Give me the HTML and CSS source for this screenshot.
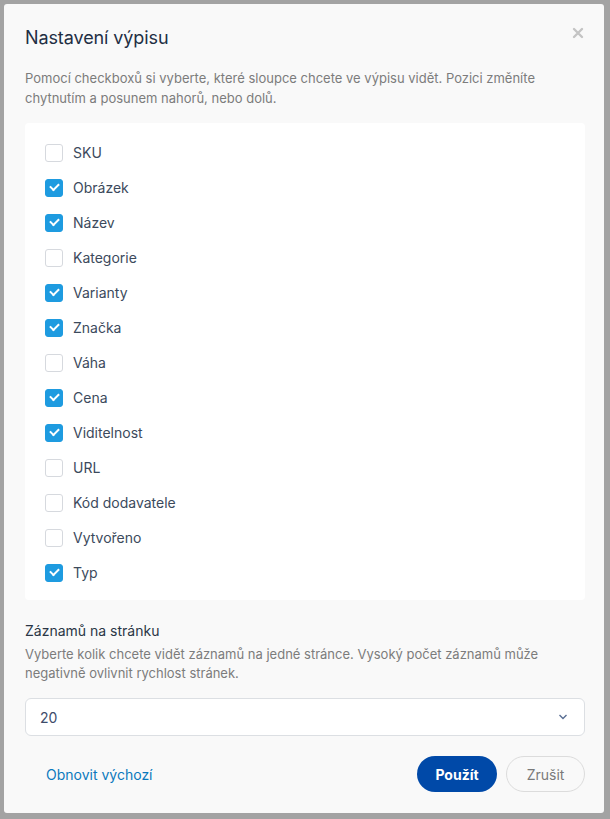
FILE: index.html
```html
<!DOCTYPE html>
<html lang="cs">
<head>
<meta charset="utf-8">
<link rel="stylesheet" href="styles.css">
</head>
<body>
<div class="modal">
  <div class="header">
    <h2 class="title">Nastavení výpisu</h2>
    <span class="close">
      <svg width="12" height="12" viewBox="0 0 12 12"><path d="M2 2 L10 10 M10 2 L2 10" stroke="#c4c4c4" stroke-width="2.4" stroke-linecap="round"/></svg>
    </span>
  </div>
  <p class="desc">Pomocí checkboxů si vyberte, které sloupce chcete ve výpisu vidět. Pozici změníte chytnutím a posunem nahorů, nebo dolů.</p>
  <ul class="list">
    <li><span class="cb"></span>SKU</li>
    <li><span class="cb on"></span>Obrázek</li>
    <li><span class="cb on"></span>Název</li>
    <li><span class="cb"></span>Kategorie</li>
    <li><span class="cb on"></span>Varianty</li>
    <li><span class="cb on"></span>Značka</li>
    <li><span class="cb"></span>Váha</li>
    <li><span class="cb on"></span>Cena</li>
    <li><span class="cb on"></span>Viditelnost</li>
    <li><span class="cb"></span>URL</li>
    <li><span class="cb"></span>Kód dodavatele</li>
    <li><span class="cb"></span>Vytvořeno</li>
    <li><span class="cb on"></span>Typ</li>
  </ul>
  <h3 class="label">Záznamů na stránku</h3>
  <p class="desc small">Vyberte kolik chcete vidět záznamů na jedné stránce. Vysoký počet záznamů může negativně ovlivnit rychlost stránek.</p>
  <div class="select">
    <span>20</span>
    <svg width="10" height="6" viewBox="0 0 10 6"><path d="M1.5 1 L5 4.5 L8.5 1" fill="none" stroke="#5a6f94" stroke-width="1.4"/></svg>
  </div>
  <div class="footer">
    <a class="reset">Obnovit výchozí</a>
    <div class="btns">
      <button class="btn primary">Použít</button>
      <button class="btn ghost">Zrušit</button>
    </div>
  </div>
</div>
</body>
</html>
```
FILE: styles.css
```css
html, body { margin: 0; padding: 0; }
body {
  background: #a3a3a3;
  width: 610px;
  height: 819px;
  padding: 4px;
  box-sizing: border-box;
  font-family: Inter, "Noto Sans", sans-serif;
}
.modal {
  width: 600px;
  height: 809px;
  box-sizing: border-box;
  background: #f9f9f9;
  border-radius: 3px;
  padding: 0 19px 0 21px;
  display: flex;
  flex-direction: column;
}
.header {
  display: flex;
  justify-content: space-between;
  align-items: center;
  height: 63px;
  box-sizing: border-box;
  padding-top: 4px;
}
.title {
  margin: 0;
  font-size: 18px;
  font-weight: 400;
  color: #1f2f44;
  letter-spacing: -0.1px;
}
.close {
  display: flex;
  margin-right: 1px;
  margin-top: -10px;
}
.desc {
  margin: 0;
  font-size: 13px;
  line-height: 20px;
  color: #7c7c7c;
  padding-top: 1px;
}
.list {
  list-style: none;
  margin: 15px 0 0;
  padding: 12px 20px 10px;
  background: #fff;
  border-radius: 4px;
}
.list li {
  display: flex;
  align-items: center;
  height: 35px;
  font-size: 14px;
  color: #3c4a5c;
}
.cb {
  width: 18px;
  height: 18px;
  box-sizing: border-box;
  border: 1px solid #d6d9de;
  border-radius: 3px;
  margin-right: 10px;
  background: #fff;
  position: relative;
}
.cb.on {
  background: #1e9be0;
  border-color: #1e9be0;
}
.cb.on::after {
  content: "";
  position: absolute;
  left: 4px;
  top: 3px;
  width: 7px;
  height: 4px;
  border-left: 2.4px solid #fff;
  border-bottom: 2.4px solid #fff;
  transform: rotate(-45deg);
}
.label {
  margin: 21px 0 0;
  font-size: 14px;
  font-weight: 400;
  color: #2a3646;
  line-height: 20px;
}
.desc.small {
  margin-top: 3px;
  line-height: 19px;
}
.select {
  margin-top: 15px;
  height: 38px;
  box-sizing: border-box;
  border: 1px solid #dcdfe3;
  border-radius: 6px;
  background: #fff;
  display: flex;
  align-items: center;
  justify-content: space-between;
  padding: 0 16px 0 14px;
  font-size: 14px;
  color: #3e4c6a;
}
.footer {
  display: flex;
  justify-content: space-between;
  align-items: center;
  margin-top: 20px;
}
.reset {
  color: #0b79bd;
  font-size: 14px;
  padding-left: 21px;
  cursor: pointer;
}
.btns {
  display: flex;
  gap: 9px;
}
.btn {
  height: 36px;
  border-radius: 18px;
  font-family: Inter, "Noto Sans", sans-serif;
  font-size: 14px;
  padding: 0;
  width: 80px;
  cursor: pointer;
}
.btn.primary {
  background: #0049a8;
  color: #fff;
  border: none;
  font-weight: 700;
}
.btn.ghost {
  background: #f9f9f9;
  color: #7a7a7a;
  border: 1px solid #dcdcdc;
  width: 79px;
}
```
